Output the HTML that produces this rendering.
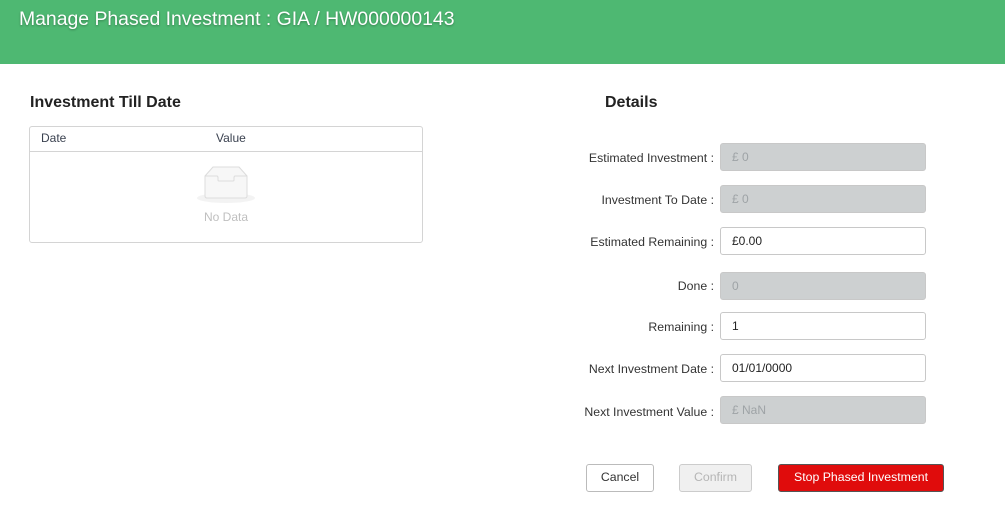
<!DOCTYPE html>
<html><head><style>
body{margin:0;width:1005px;height:521px;background:#fff;font-family:"Liberation Sans",Arial,sans-serif;position:relative;overflow:hidden}
.hdr{position:absolute;left:0;top:0;width:1005px;height:64px;background:#4eb872}
.hdr span{position:absolute;left:19px;top:8px;color:#fff;font-size:19.4px;text-shadow:0 1px 2px rgba(0,0,0,.3)}
.h{position:absolute;font-size:16px;font-weight:bold;color:#222}
.tbl{position:absolute;left:29px;top:126px;width:392px;height:115px;border:1px solid #d4d4d4;border-radius:3px}
.th{position:absolute;top:4px;font-size:12px;color:#3b4250}
.line{position:absolute;left:0;top:24px;width:392px;border-top:1px solid #d4d4d4}
.lab{position:absolute;right:291px;font-size:12.3px;color:#333;text-align:right}
.in{position:absolute;left:720px;width:204px;height:26px;border:1px solid #c8c8c8;border-radius:3px;box-sizing:content-box;font-size:12px;line-height:26px;padding-left:0}
.in span{position:absolute;left:11px}
.d{background:#cdd0d1;color:#9ea3a6}
.e{background:#fff;color:#222}
.btn{position:absolute;top:464px;height:28px;border:1px solid #bbb;border-radius:3px;font-size:12.3px;line-height:25px;text-align:center;box-sizing:border-box}
</style></head><body>
<div class="hdr"><span>Manage Phased Investment : GIA / HW000000143</span></div>
<div class="h" style="left:30px;top:94px">Investment Till Date</div>
<div class="h" style="left:605px;top:94px">Details</div>
<div class="tbl">
<div class="th" style="left:11px">Date</div><div class="th" style="left:186px">Value</div>
<div class="line"></div>
<svg style="position:absolute;left:166px;top:37px" width="60" height="42" viewBox="0 0 60 42"><ellipse cx="30" cy="34" rx="29" ry="5" fill="#f3f3f3"/><path d="M9 12 L17 3 H43 L51 12 V32 Q51 34 49 34 H11 Q9 34 9 32 Z" fill="#f7f7f7" stroke="#dcdcdc"/><path d="M9 12 H21 Q22 12 22 14 V16 Q22 17 23 17 H37 Q38 17 38 16 V14 Q38 12 39 12 H51" fill="none" stroke="#dcdcdc"/></svg>
<div style="position:absolute;left:0;width:392px;text-align:center;top:83px;font-size:12px;color:#bfbfbf">No Data</div>
</div>
<div class="lab" style="top:151px">Estimated Investment :</div><div class="in d" style="top:143px"><span>£ 0</span></div>
<div class="lab" style="top:193px">Investment To Date :</div><div class="in d" style="top:185px"><span>£ 0</span></div>
<div class="lab" style="top:235px">Estimated Remaining :</div><div class="in e" style="top:227px"><span>£0.00</span></div>
<div class="lab" style="top:279px">Done :</div><div class="in d" style="top:272px"><span>0</span></div>
<div class="lab" style="top:320px">Remaining :</div><div class="in e" style="top:312px"><span>1</span></div>
<div class="lab" style="top:362px">Next Investment Date :</div><div class="in e" style="top:354px"><span>01/01/0000</span></div>
<div class="lab" style="top:405px">Next Investment Value :</div><div class="in d" style="top:396px"><span>£ NaN</span></div>
<div class="btn" style="left:586px;width:68px;background:#fff;color:#333">Cancel</div>
<div class="btn" style="left:679px;width:73px;background:#f0f0f0;color:#b5b5b5;border-color:#ccc">Confirm</div>
<div class="btn" style="left:778px;width:166px;background:#e00c0c;color:#fff;border-color:#555">Stop Phased Investment</div>
</body></html>
